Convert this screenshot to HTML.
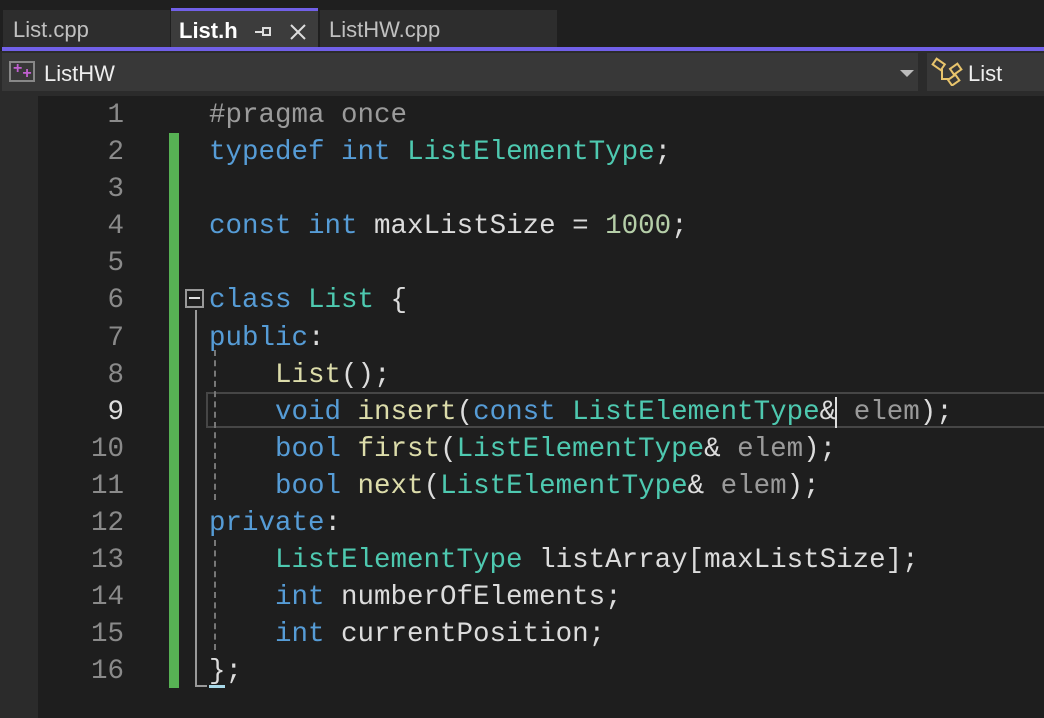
<!DOCTYPE html>
<html><head><style>
body{margin:0;width:1044px;height:718px;background:#1e1e1e;overflow:hidden;position:relative;font-family:"Liberation Sans",sans-serif}
.a{position:absolute}
.code{position:absolute;left:209px;font-family:"Liberation Mono",monospace;font-size:27.5px;color:#dcdcdc;white-space:pre;line-height:37.1px}
.ln{position:absolute;left:40px;width:84px;text-align:right;font-family:"Liberation Mono",monospace;font-size:27.5px;color:#8a8a8a;line-height:37.1px}
.k{color:#569cd6}.t{color:#4ec9b0}.f{color:#dcdcaa}.n{color:#b5cea8}.p{color:#9a9a9a}.g{color:#9b9b9b}
</style></head><body>
<div class="a" style="left:0;top:0;width:1044px;height:47px;background:#1f1f1f"></div>
<div class="a" style="left:3px;top:10px;width:167px;height:37px;background:#2d2d2d;color:#c0c0c0;font-size:22px;line-height:40px;padding-left:10px;box-sizing:border-box">List.cpp</div>
<div class="a" style="left:171px;top:8px;width:147px;height:3px;background:#7160e8"></div>
<div class="a" style="left:171px;top:11px;width:147px;height:36px;background:#3c3c3c;color:#fff;font-weight:bold;font-size:22px;line-height:40px;padding-left:8px;box-sizing:border-box">List.h</div>
<div class="a" style="left:320px;top:10px;width:237px;height:37px;background:#2d2d2d;color:#c0c0c0;font-size:22px;line-height:40px;padding-left:9px;box-sizing:border-box">ListHW.cpp</div>
<div class="a" style="left:255px;top:31px;width:9px;height:2px;background:#ddd"></div>
<div class="a" style="left:262px;top:27px;width:9px;height:9px;border:2px solid #ddd;box-sizing:border-box"></div>
<svg class="a" style="left:289px;top:23px" width="18" height="18"><path d="M2 2L16 16M16 2L2 16" stroke="#ddd" stroke-width="2"/></svg>
<div class="a" style="left:2px;top:47px;width:1042px;height:4px;background:#7160e8"></div>
<div class="a" style="left:0;top:51px;width:1044px;height:45px;background:#2b2b2b"></div>
<div class="a" style="left:2px;top:53px;width:916px;height:38px;background:#383838"></div>
<div class="a" style="left:9px;top:61px;width:26px;height:21px;border:2px solid #888;box-sizing:border-box"></div>
<div class="a" style="left:13px;top:60px;color:#c060d0;font-size:16px;font-weight:bold">+<span style="position:relative;top:5px">+</span></div>
<div class="a" style="left:44px;top:61px;color:#eee;font-size:22px">ListHW</div>
<svg class="a" style="left:900px;top:70px" width="14" height="8"><path d="M0 0H14L7 7Z" fill="#bbb"/></svg>
<div class="a" style="left:927px;top:53px;width:117px;height:38px;background:#383838"></div>
<svg class="a" style="left:930px;top:56px" width="40" height="30"><g fill="none" stroke="#e8c46c" stroke-width="2"><rect x="4" y="5" width="10" height="7" transform="rotate(35 9 8)"/><rect x="21" y="10" width="9" height="7" transform="rotate(-35 25 13)"/><rect x="19" y="21" width="9" height="7" transform="rotate(-35 23 24)"/><path d="M12 13V23H19"/></g></svg>
<div class="a" style="left:968px;top:61px;color:#eee;font-size:22px">List</div>
<div class="a" style="left:0;top:96px;width:38px;height:622px;background:#2b2b2b"></div>
<div class="a" style="left:169px;top:133px;width:10px;height:555px;background:#57b154"></div>
<div class="a" style="left:206px;top:392px;width:840px;height:36px;border:2px solid #464646;box-sizing:border-box"></div>
<div class="a" style="left:185px;top:289px;width:19px;height:19px;border:2px solid #999;box-sizing:border-box"></div>
<div class="a" style="left:189px;top:297px;width:11px;height:2px;background:#ddd"></div>
<div class="a" style="left:195px;top:310px;width:2px;height:377px;background:#999"></div>
<div class="a" style="left:195px;top:685px;width:12px;height:2px;background:#999"></div>
<div class="a" style="left:214px;top:350px;width:0;height:150px;border-left:2px dashed #777"></div>
<div class="a" style="left:214px;top:540px;width:0;height:110px;border-left:2px dashed #777"></div>
<div class="a" style="left:209px;top:685px;width:16px;height:3px;background:#a8d8e8"></div>
<div class="ln" style="top:97px">1<br>2<br>3<br>4<br>5<br>6<br>7<br>8<br><span style="color:#ddd">9</span><br>10<br>11<br>12<br>13<br>14<br>15<br>16</div>
<div class="code" style="top:97px"><span class="g">#pragma once</span>
<span class="k">typedef</span> <span class="k">int</span> <span class="t">ListElementType</span>;

<span class="k">const</span> <span class="k">int</span> maxListSize = <span class="n">1000</span>;

<span class="k">class</span> <span class="t">List</span> {
<span class="k">public</span>:
    <span class="f">List</span>();
    <span class="k">void</span> <span class="f">insert</span>(<span class="k">const</span> <span class="t">ListElementType</span>&amp;<span style="border-left:2px solid #ddd;margin-left:-1px"></span> <span class="p">elem</span>);
    <span class="k">bool</span> <span class="f">first</span>(<span class="t">ListElementType</span>&amp; <span class="p">elem</span>);
    <span class="k">bool</span> <span class="f">next</span>(<span class="t">ListElementType</span>&amp; <span class="p">elem</span>);
<span class="k">private</span>:
    <span class="t">ListElementType</span> listArray[maxListSize];
    <span class="k">int</span> numberOfElements;
    <span class="k">int</span> currentPosition;
};</div>
</body></html>
